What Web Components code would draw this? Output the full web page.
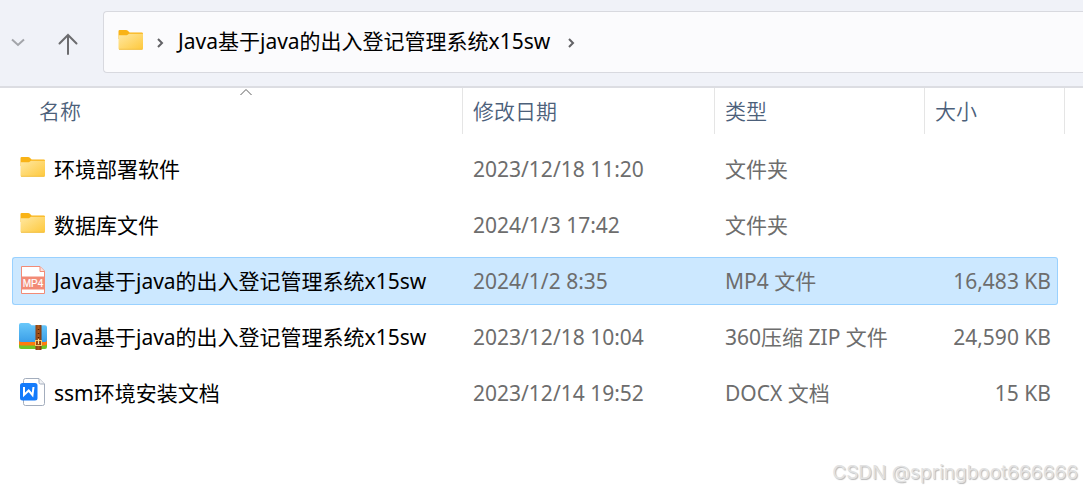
<!DOCTYPE html>
<html lang="zh-CN">
<head>
<meta charset="utf-8">
<title>文件资源管理器</title>
<style>
  body {
    margin: 0;
    background: #fff;
    font-family: "Noto Sans", "Noto Sans CJK SC", sans-serif;
    font-size: 21px;
    line-height: 28px;
    color: #000;
  }
</style>
</head>
<body>
<explorer-window>
  <address-bar slot="bar">Java基于java的出入登记管理系统x15sw</address-bar>
  <file-list></file-list>
  <page-mark slot="mark">CSDN @springboot666666</page-mark>
</explorer-window>

<script>
const icons = {
  folder: `
    <svg width="28" height="28" viewBox="0 0 28 28">
      <defs><linearGradient id="f" x1="0" y1="0" x2="1" y2="1">
        <stop offset="0" stop-color="#ffe8a2"/><stop offset="1" stop-color="#fec83b"/>
      </linearGradient></defs>
      <path d="M1.5 6V4.2Q1.5 3 2.7 3H9.2Q10 3 10.6 3.6L12.6 5.6H24.8Q26 5.6 26 6.8V12H1.5z" fill="#f9b316"/>
      <path d="M1.5 8.2H9.6Q10.4 8.2 11 7.6L12 6.7H26V21.6Q26 22.7 24.9 22.7H2.6Q1.5 22.7 1.5 21.6z" fill="url(#f)"/>
      <path d="M2 22.3H25.5" stroke="#f0bd42" stroke-width=".8"/>
    </svg>`,
  mp4: `
    <svg width="28" height="28" viewBox="0 0 28 28">
      <path d="M2.5.5H21L25.5 5V27.5H2.5z" fill="#fff" stroke="#f28b76"/>
      <path d="M21 .8V5.5H25.5" fill="#fde1dc" stroke="#f28b76"/>
      <path d="M2 10.5H26V23.5H2z" fill="#f28b76"/>
      <text x="14" y="20.5" text-anchor="middle" font-family="Liberation Sans, sans-serif" font-size="10" fill="#fff" stroke="#fff" stroke-width=".2">MP4</text>
    </svg>`,
  zip: `
    <svg width="28" height="28" viewBox="0 0 28 28">
      <defs>
        <linearGradient id="b" x1="0" y1="0" x2="0" y2="1">
          <stop offset="0" stop-color="#69c8fa"/><stop offset="1" stop-color="#3b9fe8"/>
        </linearGradient>
        <linearGradient id="s"><stop offset="0" stop-color="#8a3f10"/><stop offset=".5" stop-color="#a9581c"/><stop offset="1" stop-color="#7a340c"/></linearGradient>
      </defs>
      <rect y="19" width="28" height="8" rx="2" fill="#6fc527"/>
      <rect y="16" width="28" height="7.5" rx="2" fill="#ff7b0d"/>
      <path d="M0 3Q0 1 2 1H9Q10.3 1 11.2 2L12.5 3.3H26Q28 3.3 28 5.3V18Q28 20 26 20H2Q0 20 0 18z" fill="url(#b)"/>
      <rect x="16.5" y="3" width="6" height="25" rx=".6" fill="url(#s)"/>
      <path d="M19.5 7V8M19.5 11V12M19.5 15V16" stroke="#4f1f04" stroke-width="1.5"/>
      <rect x="16.5" y="18.5" width="6" height="5" fill="none" stroke="#f4c869"/>
      <path d="M19.5 17V22" stroke="#ffe09a"/>
    </svg>`,
  docx: `
    <svg width="28" height="28" viewBox="0 0 28 28">
      <path d="M6.5.5H20L25.5 6V25.5Q25.5 27.5 23.5 27.5H6.5Q4.5 27.5 4.5 25.5V2.5Q4.5.5 6.5.5z" fill="#fff" stroke="#a3adbd"/>
      <path d="M20 .8V4.5Q20 6 21.5 6H25.3" fill="#f1f3f6" stroke="#a3adbd"/>
      <rect x="1" y="5" width="17.5" height="17.5" rx="2.5" fill="#147bfb"/>
      <path d="M5 9V17L9.7 12.5L13.5 17L14.5 9" fill="none" stroke="#fff" stroke-width="2"/>
    </svg>`,
};

class FileIcon extends HTMLElement {
  constructor() {
    super();
    this.attachShadow({ mode: 'open' });
  }

  connectedCallback() {
    this.shadowRoot.innerHTML = `
      <style>
        :host { display: block; flex: none; width: 28px; height: 28px; }
        svg { display: block; }
      </style>
      ${icons[this.getAttribute('kind')] ?? ''}
    `;
  }
}

class AddressBar extends HTMLElement {
  constructor() {
    super();
    this.attachShadow({ mode: 'open' });
    this.shadowRoot.innerHTML = `
      <style>
        :host {
          display: flex;
          align-items: center;
          padding: 11px 0 13px;
          background: #f0f2f8;
          border-bottom: 2px solid #dcdde2;
        }
        button {
          border: 0;
          padding: 0;
          background: none;
          font: inherit;
          color: inherit;
          display: block;
        }
        svg { display: block; }
        .recent { margin-left: 8px; }
        .up { margin: 4px 25px 0 30px; }
        nav {
          flex: 1;
          display: flex;
          align-items: center;
          height: 60px;
          padding-left: 13px;
          background: #fbfbfd;
          border: 1px solid #d8d9df;
          border-right: 0;
          border-radius: 4px 0 0 4px;
        }
        nav file-icon { margin-bottom: 2px; }
        nav button { padding: 0 6px 2px 2px; }
        .sep { margin: 2px 11px 0 10px; }
      </style>
      <button class="recent" type="button" aria-label="最近的位置">
        <svg width="20" height="20" fill="none" stroke="#a3a5aa" stroke-width="2"><path d="M4 7.5L10 13L16 7.5"/></svg>
      </button>
      <button class="up" type="button" aria-label="向上">
        <svg width="20" height="22" fill="none" stroke="#6c6c6f" stroke-width="2" stroke-linecap="round"><path d="M10 21V2M1.500 10.500L10 2L18.500 10.500"/></svg>
      </button>
      <nav aria-label="地址">
        <file-icon kind="folder"></file-icon>
        <svg class="sep" width="10" height="12" fill="none" stroke="#626266" stroke-width="2"><path d="M3 2L7 6L3 10"/></svg>
        <button type="button"><slot></slot></button>
        <svg class="sep" width="10" height="12" fill="none" stroke="#626266" stroke-width="2"><path d="M3 2L7 6L3 10"/></svg>
      </nav>
    `;
  }
}

const files = [
  { icon: 'folder', name: '环境部署软件', date: '2023/12/18 11:20', type: '文件夹', size: '' },
  { icon: 'folder', name: '数据库文件', date: '2024/1/3 17:42', type: '文件夹', size: '' },
  { icon: 'mp4', name: 'Java基于java的出入登记管理系统x15sw', date: '2024/1/2 8:35', type: 'MP4 文件', size: '16,483 KB', selected: true },
  { icon: 'zip', name: 'Java基于java的出入登记管理系统x15sw', date: '2023/12/18 10:04', type: '360压缩 ZIP 文件', size: '24,590 KB' },
  { icon: 'docx', name: 'ssm环境安装文档', date: '2023/12/14 19:52', type: 'DOCX 文档', size: '15 KB' },
];

class FileList extends HTMLElement {
  constructor() {
    super();
    this.attachShadow({ mode: 'open' });
    this.shadowRoot.innerHTML = `
      <style>
        :host { display: block; padding-right: 18px; }
        table {
          width: 100%;
          table-layout: fixed;
          border-collapse: separate;
          border-spacing: 0;
        }
        th, td { padding: 0; text-align: left; }
        .date { width: 252px; }
        .type { width: 210px; }
        .size { width: 140px; }
        th { position: relative; padding-bottom: 7px; font-weight: 350; }
        th button {
          display: block;
          width: 100%;
          height: 46px;
          padding: 0 0 0 10px;
          border: 0;
          border-right: 1px solid #e5e5e5;
          background: none;
          font: inherit;
          text-align: left;
          color: #4c607a;
        }
        th:first-child button { padding-left: 39px; }
        .sort { position: absolute; top: 0; left: calc(50% + 8px); }
        td { height: 56px; color: #6d6d6d; }
        .cell {
          display: flex;
          align-items: center;
          box-sizing: border-box;
          height: 48px;
          padding-left: 10px;
          border: 1px solid transparent;
          border-width: 1px 0;
        }
        file-icon { margin-bottom: 2px; }
        td:first-child .cell {
          margin-left: 12px;
          padding-left: 6px;
          gap: 7px;
          border-left-width: 1px;
          border-radius: 3px 0 0 3px;
          color: #000;
        }
        td:last-child .cell {
          margin-right: 7px;
          padding-right: 6px;
          justify-content: flex-end;
          border-right-width: 1px;
          border-radius: 0 3px 3px 0;
        }
        .selected .cell { background: #cce8ff; border-color: #99d1ff; }
      </style>
      <table>
        <thead>
          <tr>
            <th><button type="button">名称</button>
              <svg class="sort" width="12" height="8" fill="none" stroke="#5f5f5f"><path d="M.5 7L6 1.5L11.5 7"/></svg></th>
            <th class="date"><button type="button">修改日期</button></th>
            <th class="type"><button type="button">类型</button></th>
            <th class="size"><button type="button">大小</button></th>
          </tr>
        </thead>
        <tbody></tbody>
      </table>
    `;
    this._body = this.shadowRoot.querySelector('tbody');
    this._render();
  }

  _render() {
    this._body.innerHTML = files.map((f) => `
      <tr${f.selected ? ' class="selected"' : ''}>
        <td><div class="cell"><file-icon kind="${f.icon}"></file-icon><span>${f.name}</span></div></td>
        <td><div class="cell">${f.date}</div></td>
        <td><div class="cell">${f.type}</div></td>
        <td><div class="cell">${f.size}</div></td>
      </tr>`).join('');
  }
}

class PageMark extends HTMLElement {
  constructor() {
    super();
    this.attachShadow({ mode: 'open' });
    this.shadowRoot.innerHTML = `
      <style>
        :host {
          display: block;
          font: 19px/24px Inter, sans-serif;
          color: #e2e2e2;
          text-shadow: 1px 1px 1px #b8b8b8;
        }
      </style>
      <slot></slot>
    `;
  }
}

class ExplorerWindow extends HTMLElement {
  constructor() {
    super();
    this.attachShadow({ mode: 'open' });
    this.shadowRoot.innerHTML = `
      <style>
        :host { display: flex; flex-direction: column; min-height: 100vh; }
        main { flex: 1; }
        footer { display: flex; justify-content: flex-end; padding: 0 5px 4px 0; }
      </style>
      <slot name="bar"></slot>
      <main><slot></slot></main>
      <footer><slot name="mark"></slot></footer>
    `;
  }
}

customElements.define('file-icon', FileIcon);
customElements.define('address-bar', AddressBar);
customElements.define('file-list', FileList);
customElements.define('page-mark', PageMark);
customElements.define('explorer-window', ExplorerWindow);
</script>
</body>
</html>
